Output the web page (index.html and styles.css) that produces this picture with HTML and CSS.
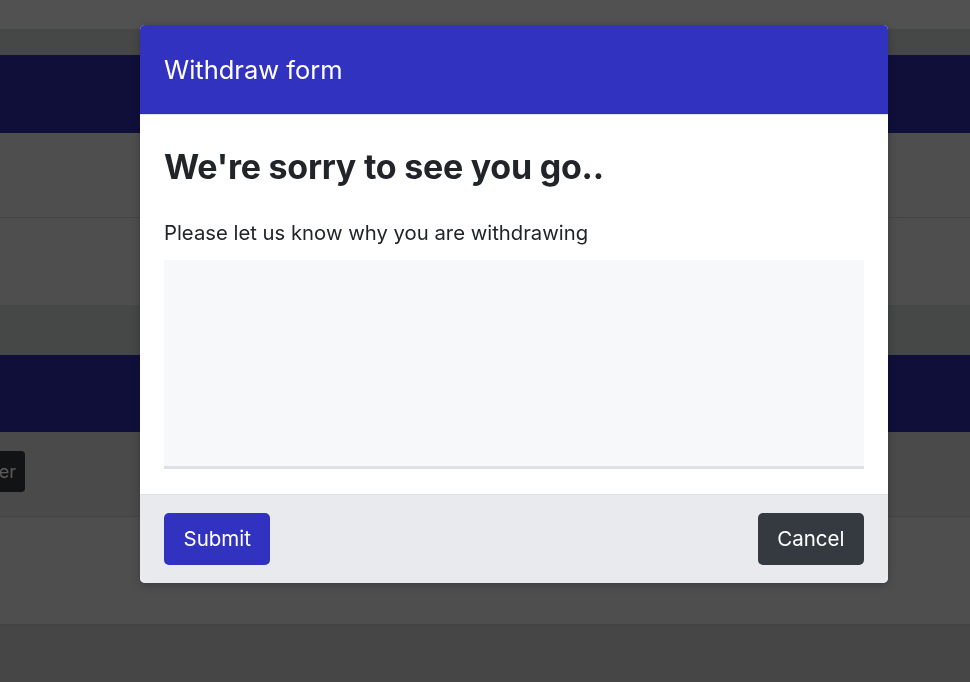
FILE: index.html
```html
<!DOCTYPE html>
<html lang="en">
<head>
<meta charset="utf-8">
<title>Withdraw form</title>
<link rel="stylesheet" href="styles.css">
</head>
<body>
<div class="page">
  <div class="band band-top"></div>
  <div class="band band-dark"></div>
  <div class="band band-navy"></div>
  <div class="band band-row line"></div>
  <div class="band band-row2"></div>
  <div class="band band-dark2"></div>
  <div class="band band-navy2"></div>
  <div class="band band-btnrow line">
    <div class="clip"><span class="ghost-btn">Register</span></div>
  </div>
  <div class="band band-row3 line"></div>
  <div class="band band-bottom"></div>
</div>

<div class="overlay">
  <div class="modal">
    <div class="modal-header">
      <h5 class="modal-title">Withdraw form</h5>
    </div>
    <div class="modal-body">
      <h2 class="heading">We're sorry to see you go..</h2>
      <label class="label" for="reason">Please let us know why you are withdrawing</label>
      <textarea id="reason" class="reason"></textarea>
    </div>
    <div class="modal-footer">
      <button class="btn btn-primary" type="button">Submit</button>
      <button class="btn btn-dark" type="button">Cancel</button>
    </div>
  </div>
</div>
</body>
</html>
```

FILE: styles.css
```css
* { box-sizing: border-box; }
html, body { margin: 0; padding: 0; }
body {
  font-family: Inter, "Noto Sans", "Liberation Sans", sans-serif;
  background: #4e4e4e;
  width: 970px;
  height: 682px;
  overflow: hidden;
}
.page { display: flex; flex-direction: column; }
.band { width: 100%; }
.band-top { height: 29px; background: #515151; }
.band-dark { height: 26px; background: #464747; }
.band-navy { height: 78px; background: #100f3a; }
.band-row { height: 85px; background: #4e4e4e; }
.line { border-bottom: 1px solid #444444; }
.band-row2 { height: 87px; background: #4e4e4e; }
.band-dark2 { height: 50px; background: #464747; }
.band-navy2 { height: 77px; background: #100f3a; }
.band-btnrow { height: 85px; background: #4a4a4a; padding-top: 19px; }
.band-row3 { height: 108px; background: #4e4e4e; }
.band-bottom { height: 58px; background: #464646; }

.clip { width: 25px; height: 41px; overflow: hidden; display: flex; justify-content: flex-end; }
.ghost-btn {
  flex: none;
  height: 41px;
  line-height: 41px;
  padding: 0 9px 0 12px;
  background: #121314;
  color: #5a5a5a;
  border-radius: 4px;
  font-size: 18px;
}

.overlay {
  position: fixed;
  inset: 0;
  padding: 25px 0 0 140px;
}
.modal {
  width: 748px;
  background: #ffffff;
  border-radius: 5px;
  overflow: hidden;
  box-shadow: 0 2px 8px rgba(0,0,0,0.25);
}
.modal-header {
  height: 90px;
  background: #3232c0;
  display: flex;
  align-items: center;
  padding: 2px 24px 0;
  border-bottom: 1px solid #dee2e6;
}
.modal-title {
  margin: 0;
  color: #ffffff;
  font-size: 25.5px;
  font-weight: 400;
  line-height: 1.2;
}
.modal-body {
  padding: 32px 24px 25px;
  display: flex;
  flex-direction: column;
}
.heading {
  margin: 0 0 30px;
  font-size: 34px;
  font-weight: 700;
  color: #212529;
  line-height: 1.2;
  letter-spacing: -0.25px;
}
.label {
  font-size: 20.3px;
  color: #212529;
  line-height: 30px;
  margin-bottom: 12px;
}
.reason {
  display: block;
  width: 100%;
  height: 209px;
  resize: none;
  border: 0;
  border-bottom: 3px solid #dfe0e5;
  background: #f7f8fa;
  outline: none;
  margin: 0;
  font-family: inherit;
}
.modal-footer {
  height: 89px;
  background: #e9eaee;
  border-top: 1px solid #dee2e6;
  display: flex;
  align-items: center;
  justify-content: space-between;
  padding: 0 24px;
}
.btn {
  font-family: inherit;
  height: 52px;
  padding: 0 19.5px;
  border: 0;
  border-radius: 5px;
  font-size: 20.5px;
  color: #ffffff;
  line-height: 52px;
}
.btn-primary { background: #3232c0; }
.btn-dark { background: #343a40; }
```
